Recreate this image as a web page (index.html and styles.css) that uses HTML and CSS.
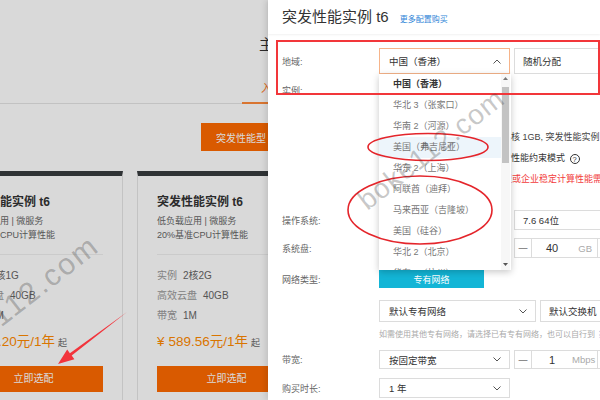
FILE: index.html
```html
<!DOCTYPE html>
<html lang="zh-CN">
<head>
<meta charset="utf-8">
<title>突发性能实例 t6</title>
<link rel="stylesheet" href="styles.css">
</head>
<body>
<div class="screen">
  <div class="site">
    <div class="hero-title">主流配置推荐</div>
    <div class="tabs">
      <div class="tab active">入门级</div>
      <div class="tab">企业级</div>
    </div>
    <div class="filter"><button class="type-btn">突发性能型</button></div>
    <div class="cards">
      <div class="card">
        <div class="card-title">突发性能实例 t6</div>
        <div class="card-sub">低负载应用 | 微服务</div>
        <div class="card-sub">20%基准CPU计算性能</div>
        <div class="card-divider"></div>
        <div class="spec"><span class="k">实例</span><span class="v">1核1G</span></div>
        <div class="spec"><span class="k">高效云盘</span><span class="v">40GB</span></div>
        <div class="spec"><span class="k">带宽</span><span class="v">1M</span></div>
        <div class="price"><span class="yen">¥</span>342.20元/1年<span class="from">起</span></div>
        <div class="card-btn">立即选配</div>
      </div>
      <div class="card">
        <div class="card-title">突发性能实例 t6</div>
        <div class="card-sub">低负载应用 | 微服务</div>
        <div class="card-sub">20%基准CPU计算性能</div>
        <div class="card-divider"></div>
        <div class="spec"><span class="k">实例</span><span class="v">2核2G</span></div>
        <div class="spec"><span class="k">高效云盘</span><span class="v">40GB</span></div>
        <div class="spec"><span class="k">带宽</span><span class="v">1M</span></div>
        <div class="price"><span class="yen">¥</span>589.56元/1年<span class="from">起</span></div>
        <div class="card-btn">立即选配</div>
      </div>
    </div>
  </div>

  <div class="mask"></div>

  <aside class="drawer">
    <header class="drawer-head">
      <h1 class="drawer-title">突发性能实例 t6</h1>
      <a class="more-link">更多配置购买</a>
    </header>
    <div class="form">
      <div class="row r-region">
        <div class="label">地域:</div>
        <div class="ctrl">
          <div class="select focus">中国（香港）<svg class="chev" width="8" height="5" viewBox="0 0 8 5"><polyline points="0.5,4.5 4,1 7.5,4.5" fill="none" stroke="#555" stroke-width="1"/></svg></div>
          <div class="select wide">随机分配</div>
        </div>
      </div>
      <div class="row r-inst">
        <div class="label">实例:</div>
        <div class="ctrl inst-info">
          <div class="info-line first">2核 1GB, 突发性能实例 t6</div>
          <div class="info-line dark">无性能约束模式 <span class="help">?</span></div>
          <div class="info-line red">型或企业稳定计算性能需求</div>
        </div>
      </div>
      <div class="row r-os">
        <div class="label">操作系统:</div>
        <div class="ctrl">
          <div class="select">CentOS</div>
          <div class="box wide">7.6 64位</div>
        </div>
      </div>
      <div class="row r-disk">
        <div class="label">系统盘:</div>
        <div class="ctrl">
          <div class="select">高效云盘</div>
          <div class="stepper"><span class="minus">—</span><span class="val">40</span><span class="unit">GB</span><span class="plus">+</span></div>
        </div>
      </div>
      <div class="row r-net">
        <div class="label">网络类型:</div>
        <div class="ctrl">
          <div class="net-btn">专有网络</div>
        </div>
      </div>
      <div class="row r-vpc">
        <div class="label"></div>
        <div class="ctrl">
          <div class="select vpc">默认专有网络<svg class="chev" width="8" height="5" viewBox="0 0 8 5"><polyline points="0.5,0.5 4,4 7.5,0.5" fill="none" stroke="#555" stroke-width="1"/></svg></div>
          <div class="select wide">默认交换机</div>
        </div>
      </div>
      <div class="row r-hint">
        <div class="label"></div>
        <div class="ctrl hint">如需使用其他专有网络，请选择已有专有网络，也可以自行到<span class="hint-link">控制台创建</span></div>
      </div>
      <div class="row r-bw">
        <div class="label">带宽:</div>
        <div class="ctrl">
          <div class="select">按固定带宽<svg class="chev" width="8" height="5" viewBox="0 0 8 5"><polyline points="0.5,0.5 4,4 7.5,0.5" fill="none" stroke="#555" stroke-width="1"/></svg></div>
          <div class="stepper"><span class="minus">—</span><span class="val">1</span><span class="unit">Mbps</span><span class="plus">+</span></div>
        </div>
      </div>
      <div class="row r-dur">
        <div class="label">购买时长:</div>
        <div class="ctrl">
          <div class="select">1 年<svg class="chev" width="8" height="5" viewBox="0 0 8 5"><polyline points="0.5,0.5 4,4 7.5,0.5" fill="none" stroke="#555" stroke-width="1"/></svg></div>
        </div>
      </div>
    </div>

    <div class="dropdown">
      <ul class="options">
        <li class="opt selected">中国（香港）</li>
        <li class="opt">华北 3（张家口）</li>
        <li class="opt">华南 2（河源）</li>
        <li class="opt hover">美国（弗吉尼亚）</li>
        <li class="opt">华东 2（上海）</li>
        <li class="opt">阿联酋（迪拜）</li>
        <li class="opt">马来西亚（吉隆坡）</li>
        <li class="opt">美国（硅谷）</li>
        <li class="opt">华北 2（北京）</li>
        <li class="opt">华东 1（杭州）</li>
      </ul>
      <div class="scrollbar">
        <svg class="sb-arrow up" width="5" height="3" viewBox="0 0 5 3"><polygon points="0,3 2.5,0 5,3" fill="#777"/></svg>
        <div class="sb-thumb"></div>
        <svg class="sb-arrow down" width="5" height="3" viewBox="0 0 5 3"><polygon points="0,0 2.5,3 5,0" fill="#555"/></svg>
      </div>
    </div>
  </aside>

  <svg class="marks" width="600" height="400" viewBox="0 0 600 400">
    <rect x="277" y="41" width="322" height="53" fill="none" stroke="#f2363a" stroke-width="2"/>
    <ellipse cx="428" cy="147" rx="60" ry="13.5" fill="none" stroke="#e4252b" stroke-width="1.6"/>
    <ellipse cx="420" cy="210" rx="72" ry="34" fill="none" stroke="#e4252b" stroke-width="1.6"/>
    <path d="M127,312 L71.7,355.6 L74.4,359.2 L58,364 L67.2,349.6 L69.9,353.2 Z" fill="#f2343c"/>
  </svg>

  <div class="wm wm-left">boke112.com</div>
  <div class="wm wm-right">boke112.com</div>
</div>
</body>
</html>
```

FILE: styles.css
```css
* { box-sizing: border-box; margin: 0; padding: 0; }
html, body { width: 600px; height: 400px; overflow: hidden; }
body { font-family: "Liberation Sans", "Noto Sans CJK SC", sans-serif; color: #333; background: #fff; }

.screen { position: relative; width: 600px; height: 400px; overflow: hidden; background: #fff; }

/* ---------- background site ---------- */
.site { width: 600px; }
.hero-title { padding: 37px 0 0 259px; font-size: 15px; line-height: 16px; color: #333; white-space: nowrap; }
.tabs { margin-top: 28px; display: flex; padding-left: 242px; border-bottom: 1px solid #e4e4e4; }
.tab { padding: 0 19px 7px; font-size: 11px; line-height: 14px; color: #333; white-space: nowrap; border-bottom: 2px solid transparent; margin-bottom: -1px; }
.tab.active { color: #ff7a1a; border-bottom-color: #ff8a3a; }
.filter { padding: 19px 0 0 201px; }
.type-btn { display: block; width: 80px; height: 28px; border: none; background: #ff6a00; color: #fff; font-family: inherit; font-size: 10px; }

.cards { display: flex; gap: 14px; margin: 20px 0 0 -56px; }
.card { flex: none; width: 179px; border: 1px solid #e6e6e6; border-top: 5px solid #383c3f; padding: 18px 19px 20px; }
.card-title { font-size: 12px; line-height: 16px; font-weight: bold; color: #333; white-space: nowrap; }
.card-sub { font-size: 9px; line-height: 14px; color: #666; white-space: nowrap; }
.card-title + .card-sub { margin-top: 4px; }
.card-divider { margin-top: 12px; height: 1px; background: #efefef; }
.spec { font-size: 10px; line-height: 20px; white-space: nowrap; }
.card-divider + .spec { margin-top: 11px; }
.spec .k { color: #999; margin-right: 6px; }
.spec .v { color: #666; }
.price { margin-top: 7px; font-size: 13.5px; line-height: 18px; color: #ff8a00; white-space: nowrap; }
.price .yen { margin-right: 4px; }
.price .from { font-size: 9px; color: #666; margin-left: 3px; }
.card-btn { margin-top: 14px; height: 26px; line-height: 26px; background: #ff6a00; color: #fff; font-size: 10px; text-align: center; }

.mask { position: absolute; inset: 0; background: rgba(0, 0, 0, 0.15); }

/* ---------- drawer ---------- */
.drawer { position: absolute; top: 0; left: 268px; width: 332px; height: 400px; background: #fff; box-shadow: -2px 0 6px rgba(0, 0, 0, 0.12); }
.drawer-head { height: 34px; display: flex; align-items: center; padding-left: 14px; box-shadow: 0 1px 2px rgba(0, 0, 0, 0.06); }
.drawer-title { font-size: 15px; font-weight: normal; color: #333; line-height: 20px; white-space: nowrap; }
.more-link { margin-left: 11px; font-size: 8px; color: #2f86d8; white-space: nowrap; padding-top: 3px; }

.form { padding-left: 14px; }
.row { display: grid; grid-template-columns: 97px 1fr; align-items: center; }
.label { font-size: 9px; color: #666; white-space: nowrap; }
.ctrl { display: flex; gap: 4px; height: 100%; white-space: nowrap; }

.r-region { margin-top: 14px; height: 26px; }
.r-inst { margin-top: 8px; height: 107.5px; align-items: start; }
.r-inst .label { line-height: 18px; }
.r-os { margin-top: 20.5px; height: 20px; }
.r-disk { margin-top: 8px; height: 20px; }
.r-net { margin-top: 12px; height: 18px; }
.r-vpc { margin-top: 12px; height: 22px; }
.r-hint { margin-top: 5px; height: 12px; }
.r-bw { margin-top: 11px; height: 19px; }
.r-dur { margin-top: 9px; height: 20px; }

.select, .box { position: relative; flex: none; width: 131px; height: 100%; border: 1px solid #dcdcdc; display: flex; align-items: center; padding-left: 9px; font-size: 9.5px; color: #333; }
.select.focus { border-color: #f6b48a; }
.select.wide, .box.wide { width: 120px; padding-left: 8px; }
.select.vpc { width: 157px; }
.chev { position: absolute; right: 8px; top: 50%; margin-top: -2.5px; }

.inst-info { display: block; padding-top: 44.5px; }
.info-line { font-size: 9px; line-height: 21px; padding-left: 123px; color: #444; white-space: nowrap; }
.info-line.first { padding-left: 127px; }
.info-line.dark { color: #333; }
.info-line.red { color: #f23c3c; padding-left: 124px; }
.help { display: inline-flex; width: 10px; height: 10px; border: 1px solid #333; border-radius: 50%; align-items: center; justify-content: center; font-size: 7.5px; line-height: 1; vertical-align: -1px; margin-left: 2px; }

.stepper { flex: none; width: 120px; height: 100%; border: 1px solid #dcdcdc; display: flex; align-items: center; font-size: 9.5px; }
.stepper .minus { flex: none; width: 17px; height: 100%; border-right: 1px solid #dcdcdc; display: flex; align-items: center; justify-content: center; font-size: 9px; color: #333; }
.stepper .val { flex: none; width: 40px; text-align: center; font-size: 11px; color: #333; }
.stepper .unit { flex: none; width: 25px; padding-right: 5px; text-align: right; color: #aaa; font-size: 9.5px; }
.stepper .plus { flex: none; width: 17px; height: 100%; border-left: 1px solid #dcdcdc; display: flex; align-items: center; justify-content: center; color: #333; }

.net-btn { width: 105px; height: 100%; background: #13b5d6; color: #fff; font-size: 9px; display: flex; align-items: center; justify-content: center; }

.hint { font-size: 8px; color: #aaa; align-items: center; }
.hint-link { color: #2f86d8; }

/* dropdown menu */
.dropdown { position: absolute; left: 111px; top: 74px; width: 132px; height: 196px; background: #fff; box-shadow: 0 2px 7px rgba(0, 0, 0, 0.22); overflow: hidden; }
.options { list-style: none; }
.opt { height: 21px; line-height: 21px; padding-left: 14px; font-size: 9px; color: #777; white-space: nowrap; }
.opt.selected { color: #333; font-weight: bold; }
.opt.hover { background: #edf5fb; }
.scrollbar { position: absolute; top: 0; right: 1px; width: 9px; height: 196px; background: #f7f7f7; display: flex; flex-direction: column; align-items: center; }
.sb-arrow.up { margin-top: 3px; }
.sb-thumb { margin-top: 7px; width: 7px; height: 76px; background: #c3c3c3; }
.sb-arrow.down { margin-top: auto; margin-bottom: 4px; }

/* annotations */
.marks { position: absolute; left: 0; top: 0; pointer-events: none; }

.wm { position: absolute; font-family: "Liberation Sans", sans-serif; font-size: 30px; line-height: 30px; letter-spacing: 2px; color: rgba(60, 60, 60, 0.3); transform-origin: 0 0; transform: rotate(-38deg); white-space: nowrap; pointer-events: none; }
.wm-right { left: 353px; top: 193px; font-size: 28px; line-height: 28px; letter-spacing: 1px; color: rgba(60, 60, 60, 0.28); }
.wm-left { left: -72px; top: 353px; }
```
